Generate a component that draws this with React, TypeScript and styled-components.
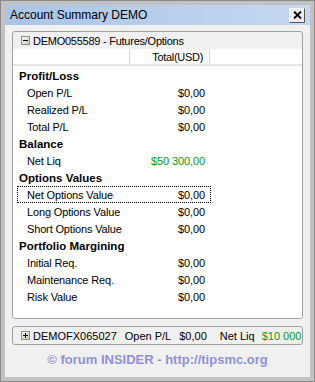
import React from "react";
import styled, { createGlobalStyle } from "styled-components";

const GlobalStyle = createGlobalStyle`
  html, body {
    margin: 0;
    padding: 0;
    background: #f0f0f0;
  }
  body {
    font-family: "Liberation Sans", Arial, sans-serif;
    color: #000;
  }
`;

const Window = styled.div`
  width: 315px;
  height: 382px;
  box-sizing: border-box;
  border: 1px solid #8a8a8a;
  background: #c2c2c2;
  padding: 4px;
  display: flex;
  flex-direction: column;
`;

const TitleBar = styled.div`
  height: 20px;
  flex-shrink: 0;
  display: flex;
  align-items: center;
  justify-content: space-between;
  padding: 0 5px 0 5px;
  background: linear-gradient(to right, #a9c5e7, #c4d8ef);
  font-size: 12px;
`;

const CloseBtn = styled.div`
  width: 16px;
  height: 15px;
  box-sizing: border-box;
  display: flex;
  align-items: center;
  justify-content: center;
  background: #eeeeee;
  border-top: 1px solid #fff;
  border-left: 1px solid #fff;
  border-right: 1px solid #555;
  border-bottom: 1px solid #555;
  svg {
    width: 9px;
    height: 8px;
  }
`;

const Body = styled.div`
  flex: 1;
  background: #f0f0f0;
  padding: 6px 7px 0 7px;
  display: flex;
  flex-direction: column;
`;

const Panel = styled.div`
  height: 288px;
  box-sizing: border-box;
  border: 1px solid #a0a0a0;
  border-radius: 3px;
  background: #f0f0f0;
  display: flex;
  flex-direction: column;
  overflow: hidden;
`;

const GroupHeader = styled.div`
  height: 17px;
  flex-shrink: 0;
  display: flex;
  align-items: center;
  gap: 3px;
  padding-left: 8px;
  font-size: 11px;
  letter-spacing: -0.25px;
`;

const Grid = styled.div`
  flex: 1;
  background: #fff;
  display: flex;
  flex-direction: column;
`;

const ColumnHeaders = styled.div`
  height: 17px;
  box-sizing: border-box;
  display: grid;
  grid-template-columns: 117px 80px 1fr;
  border-bottom: 2px solid #e6e6e6;
  font-size: 11px;
  letter-spacing: -0.3px;
`;

const HeaderCell = styled.div<{ $last?: boolean }>`
  display: flex;
  align-items: center;
  justify-content: flex-end;
  padding-right: 6px;
  border-right: ${p => (p.$last ? "none" : "1px solid #d6d6d6")};
`;

const Rows = styled.div`
  padding-top: 1px;
  display: flex;
  flex-direction: column;
`;

const Row = styled.div<{ $focused?: boolean }>`
  height: 17px;
  width: 194px;
  margin-left: 4px;
  box-sizing: border-box;
  display: grid;
  grid-template-columns: 113px 81px;
  align-items: center;
  outline: ${p => (p.$focused ? "1px dotted #000" : "none")};
  outline-offset: -1px;
`;

const Label = styled.div<{ $category?: boolean }>`
  padding-left: ${p => (p.$category ? "2px" : "10px")};
  font-size: ${p => (p.$category ? "11.5px" : "11px")};
  font-weight: ${p => (p.$category ? 700 : 400)};
  letter-spacing: ${p => (p.$category ? "0" : "-0.15px")};
  white-space: nowrap;
`;

const Value = styled.div<{ $green?: boolean }>`
  text-align: right;
  padding-right: 6px;
  font-size: 11px;
  letter-spacing: -0.1px;
  color: ${p => (p.$green ? "#0a9a12" : "#000")};
`;

const Bar = styled.div`
  margin-top: 7px;
  height: 19px;
  box-sizing: border-box;
  border: 1px solid #a0a0a0;
  border-radius: 3px;
  background: #f0f0f0;
  display: flex;
  align-items: center;
  padding-left: 8px;
  white-space: nowrap;
  overflow: hidden;
  font-size: 11px;
  svg {
    flex-shrink: 0;
  }
`;

const BarItem = styled.span<{ $gap: number; $green?: boolean }>`
  margin-left: ${p => p.$gap}px;
  flex-shrink: 0;
  color: ${p => (p.$green ? "#0a9a12" : "#000")};
`;

const Footer = styled.div`
  flex: 1;
  display: flex;
  align-items: center;
  justify-content: center;
  padding-bottom: 3px;
  font-size: 13px;
  font-weight: 700;
  color: #9090d6;
`;

function Expander({ open }: { open?: boolean }) {
  const id = open ? "gx1" : "gx2";
  return (
    <svg width="9" height="9" viewBox="0 0 9 9">
      <defs>
        <linearGradient id={id} x1="0" y1="0" x2="1" y2="1">
          <stop offset="0" stopColor="#fbfbf6" />
          <stop offset="1" stopColor="#c9c6b6" />
        </linearGradient>
      </defs>
      <rect x="0.5" y="0.5" width="8" height="8" fill={`url(#${id})`} stroke="#8e8f8f" />
      <path d="M2 4.5h5" stroke="#000" />
      {!open && <path d="M4.5 2v5" stroke="#000" />}
    </svg>
  );
}

type Item = { label: string; value?: string; category?: boolean; green?: boolean; focused?: boolean };

const items: Item[] = [
  { label: "Profit/Loss", category: true },
  { label: "Open P/L", value: "$0,00" },
  { label: "Realized P/L", value: "$0,00" },
  { label: "Total P/L", value: "$0,00" },
  { label: "Balance", category: true },
  { label: "Net Liq", value: "$50 300,00", green: true },
  { label: "Options Values", category: true },
  { label: "Net Options Value", value: "$0,00", focused: true },
  { label: "Long Options Value", value: "$0,00" },
  { label: "Short Options Value", value: "$0,00" },
  { label: "Portfolio Margining", category: true },
  { label: "Initial Req.", value: "$0,00" },
  { label: "Maintenance Req.", value: "$0,00" },
  { label: "Risk Value", value: "$0,00" },
];

export default function App() {
  return (
    <>
      <GlobalStyle />
      <Window>
        <TitleBar>
          <span>Account Summary DEMO</span>
          <CloseBtn>
            <svg viewBox="0 0 9 8">
              <path d="M1 0.5l7 7M8 0.5l-7 7" stroke="#000" strokeWidth="1.8" />
            </svg>
          </CloseBtn>
        </TitleBar>
        <Body>
          <Panel>
            <GroupHeader>
              <Expander open />
              <span>DEMO055589 - Futures/Options</span>
            </GroupHeader>
            <Grid>
              <ColumnHeaders>
                <HeaderCell />
                <HeaderCell>Total(USD)</HeaderCell>
                <HeaderCell $last />
              </ColumnHeaders>
              <Rows>
                {items.map(it => (
                  <Row key={it.label} $focused={it.focused}>
                    <Label $category={it.category}>{it.label}</Label>
                    {it.value && <Value $green={it.green}>{it.value}</Value>}
                  </Row>
                ))}
              </Rows>
            </Grid>
          </Panel>
          <Bar>
            <Expander />
            <BarItem $gap={3}>DEMOFX065027</BarItem>
            <BarItem $gap={8}>Open P/L</BarItem>
            <BarItem $gap={8}>$0,00</BarItem>
            <BarItem $gap={13}>Net Liq</BarItem>
            <BarItem $gap={7} $green>$10 000,</BarItem>
          </Bar>
          <Footer>© forum INSIDER - http://tipsmc.org</Footer>
        </Body>
      </Window>
    </>
  );
}
